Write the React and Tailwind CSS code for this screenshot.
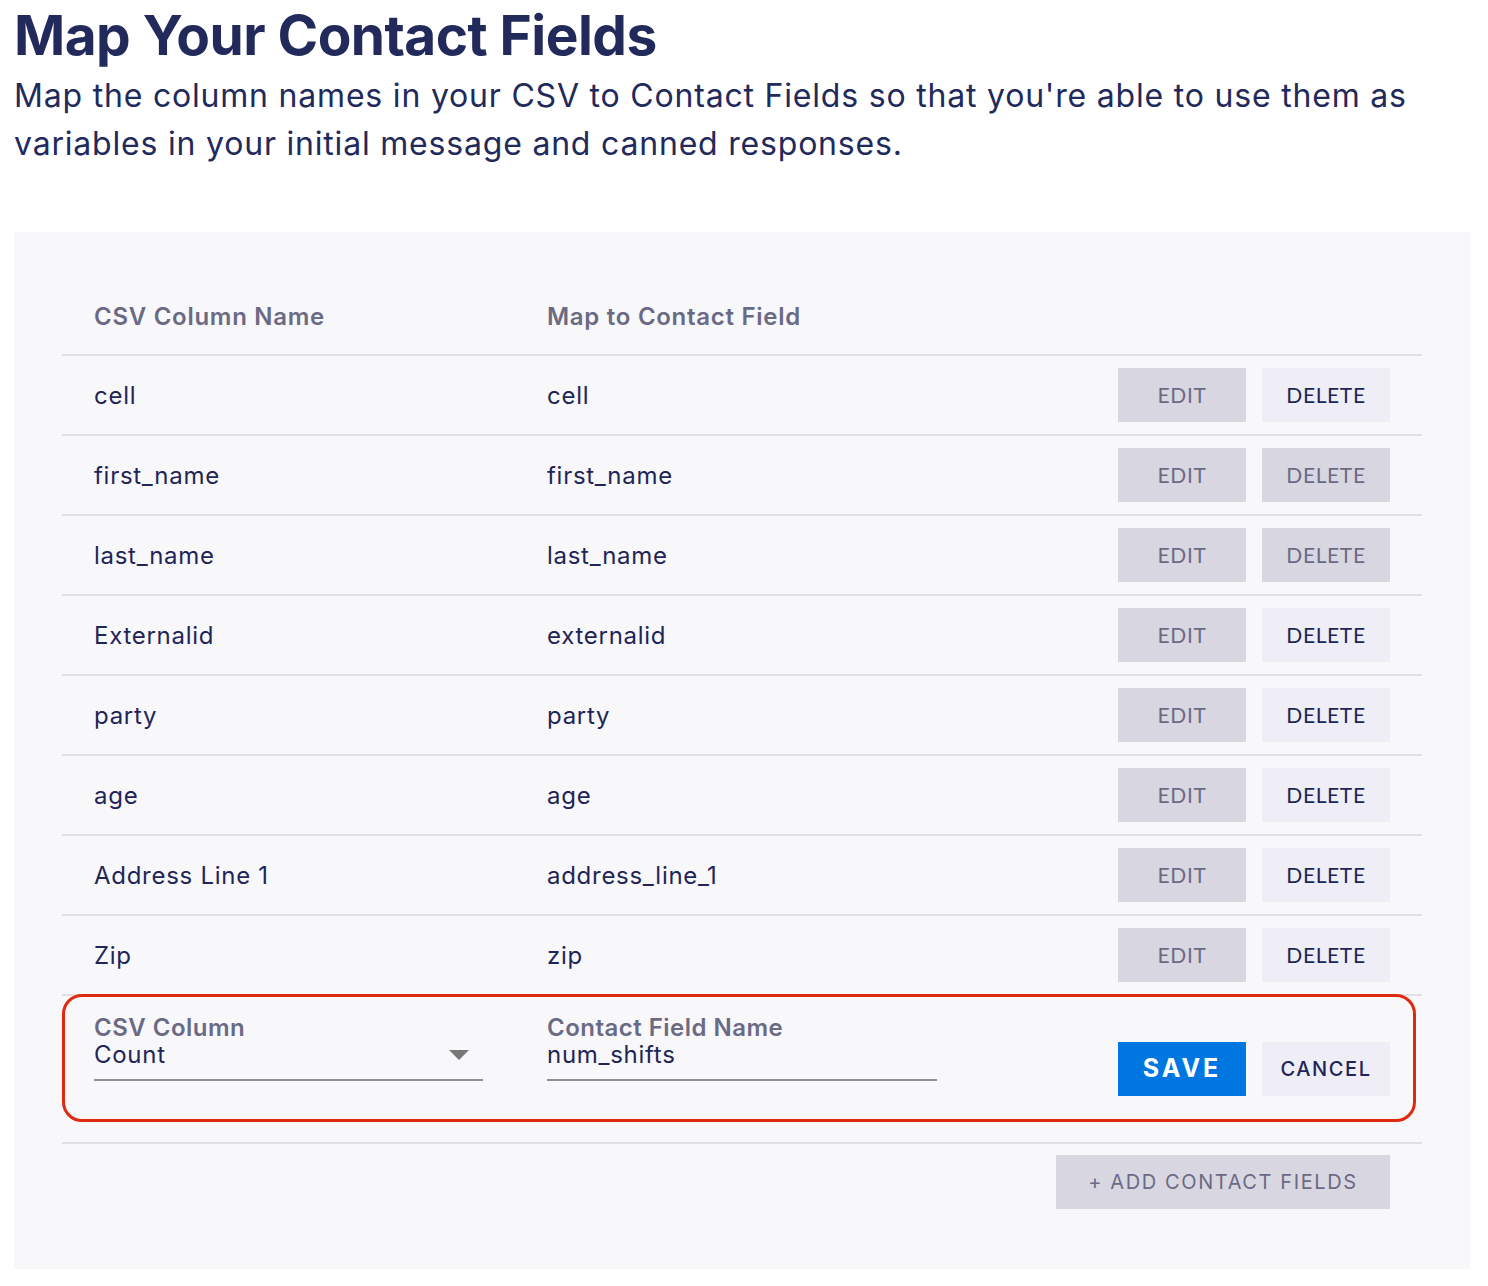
import React from "react";

const rows = [
  { csv: "cell", field: "cell", canDelete: true },
  { csv: "first_name", field: "first_name", canDelete: false },
  { csv: "last_name", field: "last_name", canDelete: false },
  { csv: "Externalid", field: "externalid", canDelete: true },
  { csv: "party", field: "party", canDelete: true },
  { csv: "age", field: "age", canDelete: true },
  { csv: "Address Line 1", field: "address_line_1", canDelete: true },
  { csv: "Zip", field: "zip", canDelete: true },
];

const sans = { fontFamily: "Inter, 'Noto Sans', sans-serif" };
const humanist = { fontFamily: "Lato, 'Open Sans', sans-serif" };

const RowButton = ({ label, enabled }) => (
  <button
    style={humanist}
    className={`h-[54px] w-[128px] text-[21px] tracking-[0.03em] ${
      enabled ? "bg-[#efeef7] text-[#1f2557]" : "bg-[#d8d7e1] text-[#6b6a85]"
    }`}
  >
    {label}
  </button>
);

const App = () => {
  return (
    <div style={sans} className="min-h-screen bg-white text-[#1f2557]">
      <header className="px-[14px] pt-[4px]">
        <h1 className="text-[55px] font-bold leading-[62px] tracking-[-0.01em] text-[#222a5c]">
          Map Your Contact Fields
        </h1>
        <p className="mt-[6px] text-[32px] leading-[48px] tracking-[0.025em] text-[#222a5c]">
          Map the column names in your CSV to Contact Fields so that you're able to use them as
          <br />
          variables in your initial message and canned responses.
        </p>
      </header>

      <section className="ml-[14px] mr-[18px] mt-[64px] h-[1037px] bg-[#f8f8fa] px-12 pt-12">
        {/* Header row */}
        <div className="flex h-[76px] items-center border-b-2 border-[#e0dfe5] pl-8 text-[24px] font-semibold tracking-[0.03em] text-[#6b6a85]">
          <div className="w-[453px]">CSV Column Name</div>
          <div className="flex-1">Map to Contact Field</div>
        </div>

        {rows.map((row) => (
          <div
            key={row.csv}
            className="flex h-[80px] items-center border-b-2 border-[#e0dfe5] pl-8 pr-8 pt-[2px] text-[24px] tracking-[0.03em]"
          >
            <div className="w-[453px]">{row.csv}</div>
            <div className="flex-1">{row.field}</div>
            <div className="-mt-[2px] flex gap-4">
              <RowButton label="EDIT" enabled={false} />
              <RowButton label="DELETE" enabled={row.canDelete} />
            </div>
          </div>
        ))}

        {/* New field row */}
        <div className="-mt-[2px] mr-[6px] flex h-[128px] rounded-[20px] border-[3px] border-[#e02a10] pl-[29px] pr-[23px]">
          <div className="mt-[18px] w-[389px]">
            <div className="text-[24px] font-semibold leading-[26px] tracking-[0.02em] text-[#6b6a85]">CSV Column</div>
            <div className="flex items-center justify-between border-b-2 border-[#8e8e93] pb-[10px] text-[24px] leading-[28px] tracking-[0.03em]">
              <span>Count</span>
              <svg width="20" height="10" viewBox="0 0 20 10" className="mr-[14px]">
                <path d="M0 0 L20 0 L10 10 Z" fill="#777777" />
              </svg>
            </div>
          </div>
          <div className="ml-[64px] mt-[18px] w-[390px]">
            <div className="text-[24px] font-semibold leading-[26px] tracking-[0.02em] text-[#6b6a85]">Contact Field Name</div>
            <div className="border-b-2 border-[#8e8e93] pb-[10px] text-[24px] leading-[28px] tracking-[0.03em]">num_shifts</div>
          </div>
          <div className="ml-auto mt-[45px] flex gap-4">
            <button className="h-[54px] w-[128px] bg-[#0077e0] text-[25px] font-bold tracking-[0.12em] text-white">
              SAVE
            </button>
            <button className="h-[54px] w-[128px] bg-[#efeef7] text-[20px] font-medium tracking-[0.08em] text-[#1f2557]">
              CANCEL
            </button>
          </div>
        </div>

        <div className="mt-[20px] flex justify-end border-t-2 border-[#e0dfe5] pr-8 pt-[11px]">
          <button className="h-[54px] w-[334px] bg-[#d8d7e1] text-[20px] tracking-[0.08em] text-[#6b6a85]">
            + ADD CONTACT FIELDS
          </button>
        </div>
      </section>
    </div>
  );
};

export default App;
